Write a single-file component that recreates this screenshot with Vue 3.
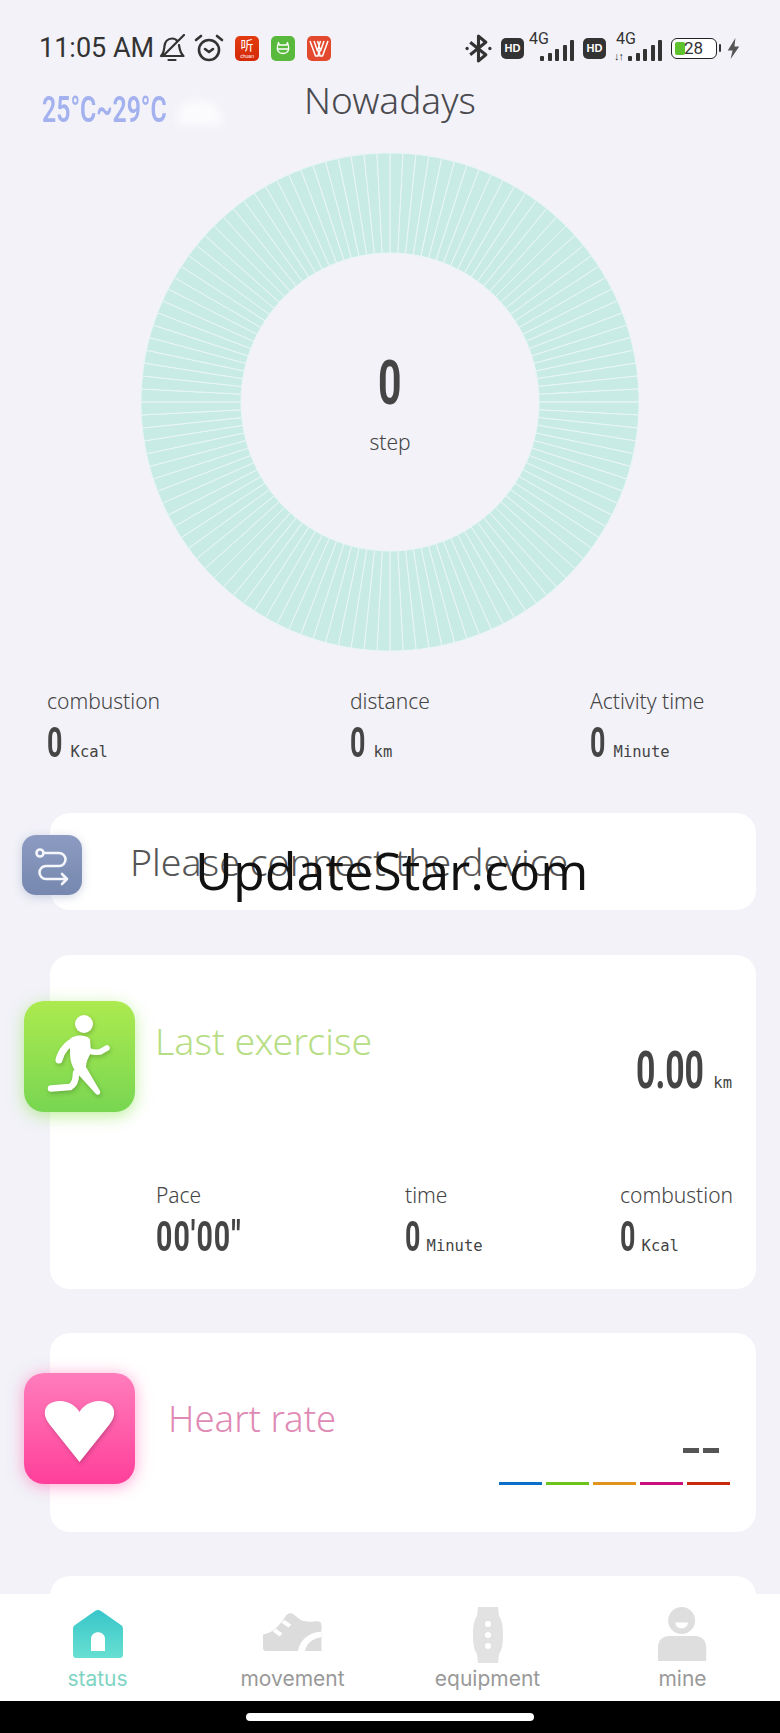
<script setup>
const cx = 250
const cy = 250
const outer = 249
const inner = 149
const count = 120

// one slice per step of the ring
const slices = Array.from({ length: count }, (_, i) => {
  const a0 = (i / count) * Math.PI * 2 - Math.PI / 2
  const a1 = ((i + 1) / count) * Math.PI * 2 - Math.PI / 2
  const p = (r, a) => `${(cx + r * Math.cos(a)).toFixed(2)} ${(cy + r * Math.sin(a)).toFixed(2)}`
  return `M${p(inner, a0)}L${p(outer, a0)}A${outer} ${outer} 0 0 1 ${p(outer, a1)}L${p(inner, a1)}A${inner} ${inner} 0 0 0 ${p(inner, a0)}Z`
})

const stats = [
  { label: 'combustion', unit: 'Kcal' },
  { label: 'distance', unit: 'km' },
  { label: 'Activity time', unit: 'Minute' },
]

const zones = ['#0a6fc9', '#6cc31c', '#e2931b', '#c90f7c', '#c92a0c']
</script>

<template>
  <div class="page">
    <main class="main">
      <!-- status bar -->
      <div class="status">
        <span class="clock">11:05 AM</span>
        <svg class="st-bell" viewBox="0 0 26 28" fill="none" stroke="#333" stroke-width="2.200" stroke-linecap="round" stroke-linejoin="round">
          <path d="M2 22c3-3 3-6 3.500-10 .5-4 3-7.500 7.500-7.500 2.500 0 4.500 1 5.500 3M20 11c.5 4 1 8 4.500 11H2M9.500 26h7M25 1 4 22" />
        </svg>
        <svg class="st-alarm" viewBox="0 0 30 30" fill="none" stroke="#333" stroke-width="2.600" stroke-linecap="round" stroke-linejoin="round">
          <circle cx="15" cy="17" r="10" />
          <path d="M2 7l5-4M28 7l-5-4M11 16l4 3 4-3" />
        </svg>
        <span class="app app-red">
          <span class="app-cn">听</span>
          <span class="app-sub">chuan</span>
        </span>
        <span class="app app-green">
          <svg viewBox="0 0 24 25" fill="none" stroke="#fff" stroke-width="1.300" stroke-linejoin="round">
            <path d="M7.500 6.500 8.500 9h7l1-2.500 1 4c1 3.500-1 7-5.500 7s-6.500-3.500-5.500-7zM6.500 13h11" />
          </svg>
        </span>
        <span class="app app-orange">
          <svg viewBox="0 0 24 25" fill="none" stroke="#fff" stroke-width="1.500" stroke-linejoin="round">
            <path d="M3 5l5.500 15H11l1-5 1 5h2.500L21 5M7 5l3.500 10L12 10l1.500 5L17 5M10.500 5 12 9.500 13.500 5" />
          </svg>
        </span>
        <span class="spacer"></span>
        <svg class="st-bt" viewBox="0 0 26 28" fill="none" stroke="#333" stroke-width="3" stroke-linejoin="round">
          <path d="M5 8l15 12-7 6V2l7 6L5 20" />
          <circle cx="2" cy="14" r="1.600" fill="#333" stroke="none" />
          <circle cx="24" cy="14" r="1.600" fill="#333" stroke="none" />
        </svg>
        <span class="hd">HD</span>
        <span class="net">
          <span class="net-label">4G</span>
          <span class="bars"><i v-for="n in 5" :key="n" :class="'b' + n"></i></span>
        </span>
        <span class="hd hd2">HD</span>
        <span class="net net2">
          <span class="net-label">4G</span>
          <span class="arrows">↓↑</span>
          <span class="bars"><i v-for="n in 5" :key="n" :class="'b' + n"></i></span>
        </span>
        <span class="battery">
          <span class="battery-fill"></span>
          <span class="battery-num">28</span>
        </span>
        <span class="battery-tip"></span>
        <svg class="st-bolt" viewBox="0 0 14 22" fill="#555">
          <path d="M9 0 1 13h5l-2 9 9-13H8z" />
        </svg>
      </div>

      <!-- header -->
      <div class="head">
        <div class="weather">
          <span class="weather-text">25°C~29°C</span>
          <span class="cloud"></span>
        </div>
        <div class="title">Nowadays</div>
      </div>

      <!-- ring -->
      <div class="ring">
        <svg class="ring-svg" viewBox="0 0 500 500">
          <path v-for="(d, i) in slices" :key="i" :d="d" fill="#c9ebe5" stroke="#eaf6f6" stroke-width="1" />
        </svg>
        <div class="ring-center">
          <span class="num num-big">0</span>
          <span class="step">step</span>
        </div>
      </div>

      <!-- today stats -->
      <div class="stats">
        <div v-for="s in stats" :key="s.label" class="stat">
          <div class="label">{{ s.label }}</div>
          <div class="value"><span class="num num-sm">0</span><span class="unit">{{ s.unit }}</span></div>
        </div>
      </div>

      <!-- device -->
      <div class="card card-device">
        <div class="icon icon-device">
          <svg viewBox="0 0 60 60" fill="none" stroke="#f4f6fb" stroke-width="2.600" stroke-linecap="round" stroke-linejoin="round">
            <circle cx="18" cy="18" r="3.500" />
            <path d="M22 18h15a6.500 6.500 0 0 1 0 13H24a6.500 6.500 0 0 0 0 13h21M40 39l5 5-5 5" />
          </svg>
        </div>
        <div class="device-text">Please connect the device</div>
      </div>

      <!-- last exercise -->
      <div class="card card-exercise">
        <div class="ex-top">
          <div class="icon icon-run">
            <svg viewBox="0 0 111 111">
              <g class="figure" fill="#fff" stroke="#fff" stroke-linecap="round" stroke-linejoin="round">
                <circle cx="60" cy="23" r="9" stroke="none" />
                <path d="M46 38c4-4 14-5 20 0l1 14c-3 5-5 9-5 14l14 24c1 4-3 5-5 2L52 71c-4-5-6-11-6-20z" stroke-width="0" />
                <path d="M52 39c-8 3-15 11-17 20" fill="none" stroke-width="7" />
                <path d="M66 50c4 2 9 1 10 1l7-4" fill="none" stroke-width="5.500" />
                <path d="M52 72c0 7-2 12-6 14l-19 1.500" fill="none" stroke-width="6.500" />
              </g>
            </svg>
          </div>
          <div class="ex-title">Last exercise</div>
          <div class="ex-dist"><span class="num num-mid">0.00</span><span class="unit">km</span></div>
        </div>
        <div class="ex-row">
          <div class="stat">
            <div class="label">Pace</div>
            <div class="value"><span class="num num-pace">00'00''</span></div>
          </div>
          <div class="stat">
            <div class="label">time</div>
            <div class="value"><span class="num num-sm">0</span><span class="unit">Minute</span></div>
          </div>
          <div class="stat">
            <div class="label">combustion</div>
            <div class="value"><span class="num num-sm">0</span><span class="unit">Kcal</span></div>
          </div>
        </div>
      </div>

      <!-- heart rate -->
      <div class="card card-heart">
        <div class="icon icon-heart">
          <svg viewBox="0 0 111 111">
            <path class="figure" fill="#fff" d="M55.500 89 26 52C16 40 21 28 36 28c9 0 16 5 19.500 11C59 33 66 28 75 28c15 0 20 12 10 24z" />
          </svg>
        </div>
        <div class="hr-title">Heart rate</div>
        <div class="hr-right">
          <div class="dashes"><i></i><i></i></div>
          <div class="zones">
            <i v-for="c in zones" :key="c" :style="{ background: c }"></i>
          </div>
        </div>
      </div>

      <div class="card card-next"></div>
    </main>

    <!-- tabs -->
    <nav class="tabs">
      <div class="tab tab-on">
        <svg class="tab-icon" viewBox="0 0 52 50">
          <defs>
            <linearGradient id="homeFill" x1="0" y1="0" x2="0" y2="1">
              <stop offset="0" stop-color="#38c6c9" />
              <stop offset="1" stop-color="#68dfd2" />
            </linearGradient>
          </defs>
          <path fill="url(#homeFill)" d="M1 20c0-2 .5-3 2-4L23 2c2-1.500 4-1.500 6 0l20 14c1.500 1 2 2 2 4v26c0 2-1.500 3-3 3H4c-1.500 0-3-1-3-3z" />
          <path fill="#fff" d="M19 42V30c0-9 14-9 14 0v12z" />
        </svg>
        <span>status</span>
      </div>
      <div class="tab">
        <svg class="tab-icon" viewBox="0 0 60 40">
          <path fill="#dcdcdc" d="M0 23c8-1 14-6 20-14l4-6c2-2 5-2 7-1l6 5c4 3 9 3 13 3 5-1 10-1 10 3v27H3c-2 0-3-1-3-3z" />
          <path fill="#fff" d="M10 20l3-3 7 5-3 3zM19 11l3-3 7 5-3 3zM36 40c1-10 10-19 24-20v6c-9 1-15 6-17 14z" />
        </svg>
        <span>movement</span>
      </div>
      <div class="tab">
        <svg class="tab-icon" viewBox="0 0 30 56">
          <path fill="#e2e2e2" d="M5 0h20l1 9c3 4 4 10 4 19s-1 15-4 19l-1 9H5l-1-9C1 43 0 37 0 28S1 13 4 9z" />
          <g fill="#fff"><circle cx="15" cy="17" r="3" /><circle cx="15" cy="28" r="3" /><circle cx="15" cy="39" r="3" /></g>
        </svg>
        <span>equipment</span>
      </div>
      <div class="tab">
        <svg class="tab-icon" viewBox="0 0 50 56">
          <circle cx="24.500" cy="14" r="14" fill="#dedede" />
          <path fill="#fff" d="M18 16h13c0 4-3 6-6.500 6S18 20 18 16z" />
          <path fill="#dedede" d="M0 42c0-8 5-12 12-12h26c7 0 12 4 12 12v14H0z" />
        </svg>
        <span>mine</span>
      </div>
    </nav>

    <div class="gesture"><span class="gesture-pill"></span></div>

    <div class="watermark">UpdateStar.com</div>
  </div>
</template>

<style scoped>
.page {
  position: relative;
  width: 780px;
  height: 1733px;
  overflow: hidden;
  display: flex;
  flex-direction: column;
  background: #f2f2f8;
  color: #444;
  font-family: "Noto Sans", sans-serif;
  font-weight: 300;
}

.main {
  height: 1594px;
  flex: none;
  overflow: hidden;
}

/* status bar */
.status {
  display: flex;
  align-items: center;
  height: 30px;
  margin-top: 33px;
  padding: 0 39px;
  color: #333;
}
.clock {
  font-family: Roboto, sans-serif;
  font-weight: 400;
  font-size: 27px;
  white-space: nowrap;
}
.st-bell { width: 26px; height: 28px; margin-left: 5px; }
.st-alarm { width: 30px; height: 30px; margin-left: 9px; }
.app {
  width: 24px;
  height: 25px;
  border-radius: 5px;
  margin-left: 12px;
  display: flex;
  flex-direction: column;
  align-items: center;
}
.st-alarm + .app { margin-left: 11px; }
.app svg { width: 24px; height: 25px; }
.app-red { background: linear-gradient(#e23b10, #d42a08); }
.app-green { background: #58b93d; }
.app-orange { background: #e2492e; }
.app-cn { color: #fff; font: 400 13px/17px "Noto Sans CJK SC", sans-serif; }
.app-sub { color: #fff; font: 400 5px/6px "Liberation Sans", sans-serif; }
.spacer { flex: 1; }
.st-bt { width: 27px; height: 29px; }
.hd {
  width: 23px;
  height: 21px;
  margin-left: 9px;
  border-radius: 5px;
  background: #333;
  color: #fff;
  font: 700 11px/21px "Liberation Sans", sans-serif;
  text-align: center;
}
.hd2 { margin-left: 9px; }
.net {
  position: relative;
  width: 45px;
  height: 26px;
  margin-left: 5px;
}
.net2 { margin-left: 10px; width: 46px; }
.net-label {
  position: absolute;
  left: 0;
  top: -4px;
  font: 400 16px/16px Roboto, sans-serif;
}
.arrows {
  position: absolute;
  left: -2px;
  bottom: -1px;
  font: 700 11px/11px "Liberation Sans", sans-serif;
  letter-spacing: -1px;
}
.bars {
  position: absolute;
  right: 0;
  bottom: 0;
  display: flex;
  align-items: flex-end;
  gap: 3.500px;
}
.bars i { display: block; width: 4px; background: #333; border-radius: 1px; }
.bars .b1 { height: 5px; }
.bars .b2 { height: 8px; }
.bars .b3 { height: 12px; }
.bars .b4 { height: 16px; }
.bars .b5 { height: 21px; }
.battery {
  box-sizing: border-box;
  display: flex;
  align-items: center;
  width: 46px;
  height: 21px;
  margin-left: 9px;
  padding: 2px 3px;
  border: 1.500px solid #222;
  border-radius: 6px;
  background: #fff;
}
.battery-fill { width: 10px; height: 13px; background: #5ec22f; border-radius: 2px; flex: none; }
.battery-num { font: 400 17px/1 Roboto, sans-serif; color: #333; margin-left: -1px; }
.battery-tip { width: 2px; height: 8px; margin-left: 2px; background: #333; border-radius: 1px; }
.st-bolt { width: 15px; height: 21px; margin-left: 5px; }

/* header */
.head {
  display: grid;
  grid-template-columns: 1fr auto 1fr;
  grid-template-rows: 44px;
  align-items: center;
  margin-top: 15px;
  height: 44px;
}
.weather {
  grid-column: 1;
  grid-row: 1;
  align-self: start;
  display: flex;
  align-items: center;
  padding-left: 42px;
  margin-top: 12px;
}
.weather-text {
  font: 600 36px/40px Roboto, sans-serif;
  color: #a3b2ee;
  transform: scaleX(.69);
  transform-origin: left center;
  margin-right: -56px;
  white-space: nowrap;
}
.cloud {
  width: 46px;
  height: 26px;
  margin: 6px 0 0 10px;
  border-radius: 20px 24px 4px 4px;
  background: #fbfbfd;
  filter: blur(4px);
}
.title {
  grid-column: 2;
  grid-row: 1;
  font-size: 37px;
  line-height: 44px;
  color: #4a4a4f;
}

/* ring */
.ring {
  display: grid;
  justify-content: center;
  align-items: center;
  margin-top: 30px;
}
.ring-svg {
  grid-area: 1 / 1;
  width: 500px;
  height: 500px;
  display: block;
}
.ring-center {
  grid-area: 1 / 1;
  display: flex;
  flex-direction: column;
  align-items: center;
  padding-bottom: 2px;
}
.step {
  font-size: 21px;
  line-height: 28px;
  margin-top: 9px;
}

/* condensed figures, no narrow family with this zero is installed */
.num {
  display: inline-block;
  font-family: Roboto, sans-serif;
  font-weight: 700;
  color: #454545;
  transform-origin: left center;
  white-space: nowrap;
}
.num-big {
  font-size: 62px;
  line-height: 72px;
  transform: scaleX(.66);
  transform-origin: center;
}
.num-mid {
  font-size: 52px;
  line-height: 60px;
  transform: scaleX(.65);
  margin-right: -35px;
}
.num-sm {
  font-size: 42px;
  line-height: 46px;
  transform: scaleX(.64);
  margin-right: -8.500px;
}
.num-pace {
  font-size: 42px;
  line-height: 46px;
  letter-spacing: 1.500px;
  transform: scaleX(.68);
}
.unit {
  font-family: "DejaVu Sans Mono", monospace;
  font-weight: 400;
  font-size: 15.500px;
  margin-left: 8px;
  color: #444;
}

/* stats */
.stats {
  display: grid;
  grid-template-columns: 303px 240px auto;
  margin-top: 35px;
  padding-left: 47px;
}
.label {
  font-size: 21px;
  line-height: 28px;
  color: #444;
}
.value {
  display: flex;
  align-items: baseline;
  margin-top: 4.500px;
}

/* cards */
.card {
  box-sizing: border-box;
  width: 706px;
  margin-left: 50px;
  background: #fff;
  border-radius: 20px;
}
.icon {
  flex: none;
  width: 111px;
  height: 111px;
  border-radius: 20px;
}
.icon svg { display: block; width: 100%; height: 100%; }
.figure { filter: drop-shadow(1px 2px 2px rgba(0, 0, 0, .2)); }

.card-device {
  display: flex;
  align-items: center;
  height: 97px;
  margin-top: 47.500px;
}
.icon-device {
  width: 60px;
  height: 60px;
  margin-left: -28px;
  margin-top: 7px;
  border-radius: 14px;
  background: linear-gradient(#8c9bc2, #7688af);
  box-shadow: 0 2px 10px rgba(118, 136, 175, .35);
}
.device-text {
  margin-left: 48px;
  font-size: 37.500px;
  color: #555;
  white-space: nowrap;
}

.card-exercise {
  height: 334px;
  margin-top: 45px;
  padding-right: 24px;
}
.ex-top {
  display: flex;
  padding-top: 46px;
  height: 111px;
}
.icon-run {
  margin-left: -26px;
  background: linear-gradient(#acea4f, #78d651);
  box-shadow: 0 4px 16px rgba(140, 225, 80, .55);
}
.ex-title {
  margin: 17px 0 0 20px;
  font-size: 37.500px;
  line-height: 46px;
  color: #b7de84;
}
.ex-dist {
  margin-left: auto;
  padding-top: 40px;
  display: flex;
  align-items: baseline;
}
.ex-row {
  display: grid;
  grid-template-columns: 249px 215px auto;
  margin-top: 69px;
  padding-left: 106px;
}
.ex-row .unit { margin-left: 6px; }

.card-heart {
  display: flex;
  height: 199px;
  margin-top: 44px;
  padding-right: 26px;
}
.icon-heart {
  margin-left: -26px;
  margin-top: 40px;
  background: linear-gradient(#ff7dbb, #ff3f9b);
  box-shadow: 0 2px 16px rgba(255, 90, 170, .55);
}
.hr-title {
  margin: 62px 0 0 33px;
  font-size: 36.500px;
  line-height: 46px;
  color: #df8ab5;
}
.hr-right {
  margin-left: auto;
  padding-top: 115px;
}
.dashes {
  display: flex;
  justify-content: flex-end;
  gap: 4px;
  padding-right: 11px;
}
.dashes i {
  display: block;
  width: 16px;
  height: 5px;
  background: #555;
}
.zones {
  display: flex;
  gap: 4px;
  margin-top: 29px;
}
.zones i {
  display: block;
  width: 43px;
  height: 3px;
}

.card-next {
  height: 60px;
  margin-top: 44px;
}

/* tabs */
.tabs {
  flex: none;
  display: grid;
  grid-template-columns: repeat(4, 195px);
  justify-content: center;
  height: 107px;
  background: #fff;
}
.tab {
  display: flex;
  flex-direction: column;
  align-items: center;
  justify-content: flex-end;
  padding-bottom: 8px;
  font-family: Inter, sans-serif;
  font-weight: 400;
  font-size: 21px;
  line-height: 28px;
  color: #999;
}
.tab-on { color: #7fd4c3; }
.tab-icon { display: block; height: 50px; margin-bottom: 6px; }
.tab:nth-child(2) .tab-icon { height: 39px; margin-bottom: 14px; }
.tab:nth-child(3) .tab-icon { height: 56px; margin-bottom: 2px; }
.tab:nth-child(4) .tab-icon { height: 54px; margin-bottom: 4px; }

.gesture {
  flex: 1;
  background: #000;
  display: flex;
  justify-content: center;
  padding-top: 12px;
}
.gesture-pill {
  width: 288px;
  height: 8px;
  border-radius: 4px;
  background: #fff;
}

.watermark {
  position: absolute;
  left: 195px;
  top: 836px;
  font-family: "Open Sans", sans-serif;
  font-weight: 400;
  font-size: 52px;
  line-height: 68px;
  color: #111;
  white-space: nowrap;
}
</style>
